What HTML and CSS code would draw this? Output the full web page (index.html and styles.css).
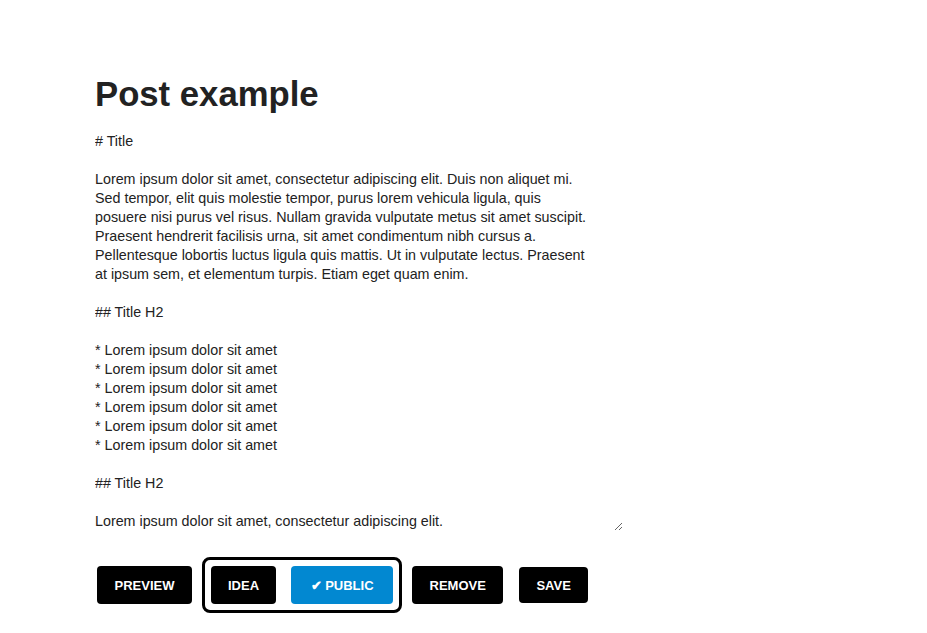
FILE: index.html
```html
<!DOCTYPE html>
<html>
<head>
<meta charset="utf-8">
<link rel="stylesheet" href="styles.css">
</head>
<body>
<main class="page">
  <h1 class="title">Post example</h1>
  <textarea class="editor" rows="21"># Title

Lorem ipsum dolor sit amet, consectetur adipiscing elit. Duis non aliquet mi.
Sed tempor, elit quis molestie tempor, purus lorem vehicula ligula, quis
posuere nisi purus vel risus. Nullam gravida vulputate metus sit amet suscipit.
Praesent hendrerit facilisis urna, sit amet condimentum nibh cursus a.
Pellentesque lobortis luctus ligula quis mattis. Ut in vulputate lectus. Praesent
at ipsum sem, et elementum turpis. Etiam eget quam enim.

## Title H2

* Lorem ipsum dolor sit amet
* Lorem ipsum dolor sit amet
* Lorem ipsum dolor sit amet
* Lorem ipsum dolor sit amet
* Lorem ipsum dolor sit amet
* Lorem ipsum dolor sit amet

## Title H2

Lorem ipsum dolor sit amet, consectetur adipiscing elit.</textarea>
  <div class="actions">
    <button class="btn btn-preview">PREVIEW</button>
    <div class="toggle">
      <button class="btn">IDEA</button>
      <button class="btn btn-active">✔ PUBLIC</button>
    </div>
    <button class="btn btn-remove">REMOVE</button>
    <button class="btn btn-save">SAVE</button>
  </div>
</main>
</body>
</html>
```
FILE: styles.css
```css
html, body {
  margin: 0;
  padding: 0;
  background: #fff;
}
body {
  font-family: "Liberation Sans", Arial, sans-serif;
  color: #222;
}
.page {
  display: flex;
  flex-direction: column;
  align-items: flex-start;
  padding: 72px 0 0 95px;
}
.title {
  margin: 0;
  font-size: 34.7px;
  line-height: 44px;
  font-weight: bold;
  color: #222;
}
.editor {
  margin-top: 16px;
  width: 528px;
  height: 399px;
  padding: 0;
  border: none;
  outline: none;
  font-family: "Liberation Sans", Arial, sans-serif;
  font-size: 14.3px;
  line-height: 19px;
  color: #222;
  background: #fff;
  overflow: hidden;
  resize: both;
  box-sizing: border-box;
}
.actions {
  margin-top: 26px;
  margin-left: 2px;
  display: flex;
  align-items: center;
}
.btn {
  font-family: "Liberation Sans", Arial, sans-serif;
  font-weight: bold;
  font-size: 13px;
  line-height: 15px;
  color: #fff;
  background: #000;
  border: none;
  border-radius: 4px;
  padding: 11.5px 17px;
  margin: 0;
  cursor: pointer;
}
.btn-preview {
  padding: 11.5px 17.5px;
}
.btn-active {
  background: #0288d1;
  padding: 11.5px 19.5px;
}
.toggle {
  display: flex;
  gap: 15px;
  margin-left: 10px;
  padding: 6px;
  border: 3px solid #000;
  border-radius: 8px;
}
.btn-remove {
  margin-left: 10px;
  padding: 11.5px 17.5px;
}
.btn-save {
  margin-left: 16px;
  padding: 10.5px 17px;
}
```
